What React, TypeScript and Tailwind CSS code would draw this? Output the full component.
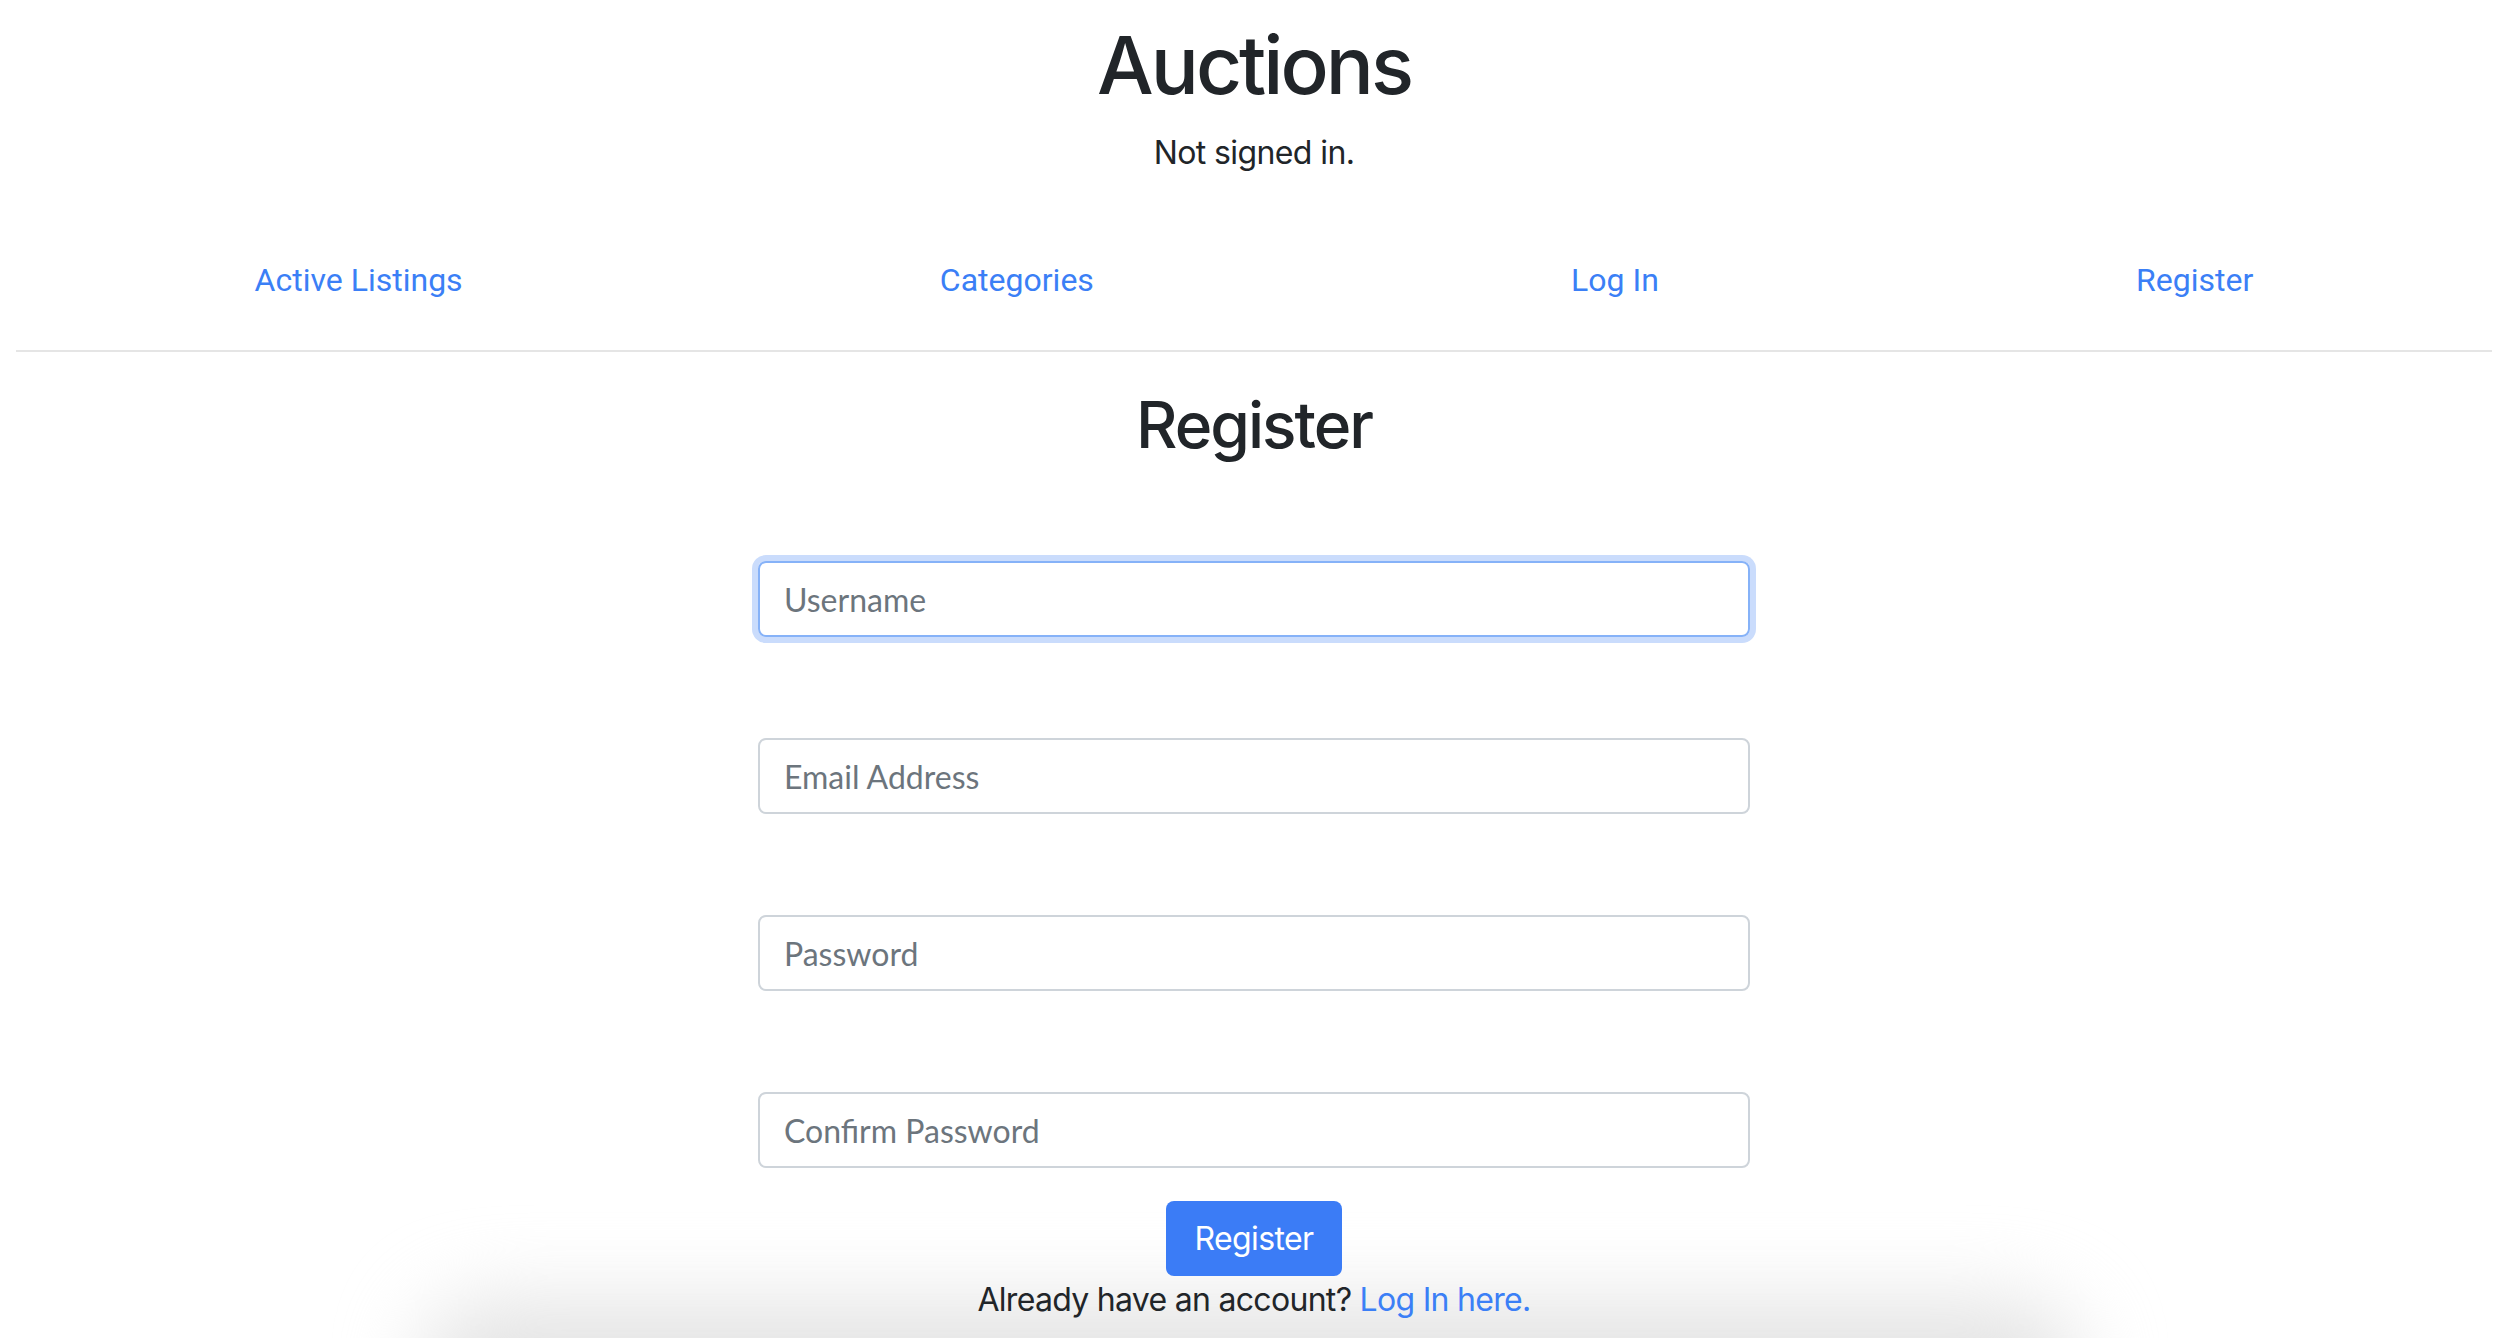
const fields = ['Username', 'Email Address', 'Password', 'Confirm Password'];

const navLinks = ['Active Listings', 'Categories', 'Log In', 'Register'];

export default function App() {
  return (
    <div className="relative h-[1338px] overflow-hidden bg-white pr-[6px] text-[#212529]" style={{ fontFamily: 'Inter, "Liberation Sans", sans-serif' }}>
      {/* soft shadow at the bottom edge */}
      <div className="pointer-events-none absolute left-[420px] top-[1300px] h-[140px] w-[1660px] rounded-full bg-[#e4e4e4] blur-[40px]" />

      <div className="relative">
        {/* Header */}
        <div className="flex flex-col items-center">
          <h1 className="mt-[17px] text-[80px] font-medium leading-[96px] tracking-[-3px]">Auctions</h1>
          <p className="mt-[16px] text-[32px] leading-[48px] tracking-[-0.6px]">Not signed in.</p>
        </div>

        {/* Nav */}
        <div className="px-[16px]">
          <nav className="mt-[79px] flex justify-around pb-[46px] border-b-2 border-[#e5e5e5]" style={{ fontFamily: 'Roboto, "Liberation Sans", sans-serif' }}>
            {navLinks.map((l) => (
              <a key={l} href="#" className="text-[32px] leading-[48px] text-[#3b7ff6]">
                {l}
              </a>
            ))}
          </nav>
        </div>

        {/* Form */}
        <div className="flex flex-col items-center">
          <h2 className="mt-[34px] text-[64px] font-medium leading-[77px] tracking-[-2px]">Register</h2>

          <form className="mt-[98px] flex w-[992px] flex-col gap-[101px]">
            {fields.map((f, i) => (
              <input
                key={f}
                type={f.includes('Password') ? 'password' : 'text'}
                placeholder={f}
                className={
                  i === 0
                    ? 'h-[76px] rounded-[8px] border-2 border-[#86b2f8] px-[24px] text-[32px] shadow-[0_0_0_6px_#cadcfc] outline-none placeholder:text-[#6c757d]'
                    : 'h-[76px] rounded-[8px] border-2 border-[#ced4da] px-[24px] text-[32px] outline-none placeholder:text-[#6c757d]'
                }
                style={{ fontFamily: 'Lato, "Open Sans", sans-serif' }}
              />
            ))}
          </form>

          <button className="mt-[33px] h-[75px] rounded-[8px] bg-[#3b7cf6] px-[28px] text-[32px] leading-[48px] tracking-[-0.6px] text-white">
            Register
          </button>
          <p className="text-[32px] leading-[48px] tracking-[-0.7px]">
            Already have an account? <a href="#" className="text-[#3b7ff6]">Log In here.</a>
          </p>
        </div>
      </div>
    </div>
  );
}
